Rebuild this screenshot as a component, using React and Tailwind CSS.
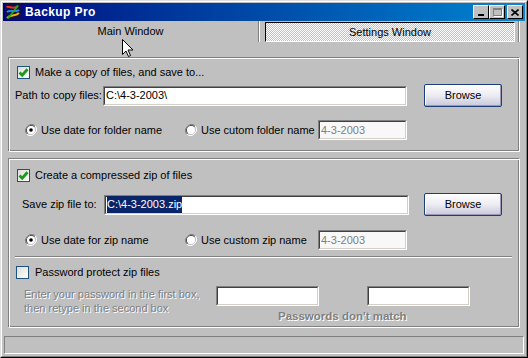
import React from 'react';

const font = { fontFamily: '"Liberation Sans", Arial, sans-serif' };

const Check = ({ checked }) => (
  <div className="w-[13px] h-[13px] border border-[#1c5180] bg-gradient-to-br from-[#dcdcd7] to-white flex items-center justify-center shrink-0">
    {checked && (
      <svg width="11" height="11" viewBox="0 0 11 11">
        <path d="M1.5 5.5 L4.2 8.2 L9.5 2.2" stroke="#1a9a1a" strokeWidth="2.8" fill="none" />
      </svg>
    )}
  </div>
);

const Radio = ({ checked }) => (
  <svg width="12" height="12" viewBox="0 0 12 12" className="shrink-0">
    <path d="M10.2 1.8 A6 6 0 0 0 1.8 10.2" stroke="#808080" strokeWidth="1" fill="none" />
    <path d="M9.5 2.5 A5 5 0 0 0 2.5 9.5" stroke="#404040" strokeWidth="1" fill="none" />
    <path d="M1.8 10.2 A6 6 0 0 0 10.2 1.8" stroke="#fff" strokeWidth="1" fill="none" />
    <circle cx="6" cy="6" r="4" fill="#fff" />
    {checked && <circle cx="6" cy="6" r="1.8" fill="#000" />}
  </svg>
);

const Field = ({ className = '', children, disabled }) => (
  <div
    className={`h-[20px] shrink-0 border-t border-l border-[#808080] border-r border-b border-r-white border-b-white ${className}`}
  >
    <div className={`h-full border-t border-l border-[#404040] border-r border-b border-r-[#d4d0c8] border-b-[#d4d0c8] flex items-center px-[1px] text-[11px] whitespace-nowrap ${disabled ? 'text-[#808080] bg-[#f8f8f8]' : 'text-black bg-white'}`}>
      {children}
    </div>
  </div>
);

const Browse = () => (
  <button className="w-[78px] h-[23px] rounded-[2px] border border-[#1c3e7a] bg-gradient-to-b from-white via-[#ececf2] to-[#c8c8dc] text-[11px] text-black shadow-[inset_-1px_-1px_0_#9a9ab8,inset_1px_1px_0_#fff]">
    Browse
  </button>
);

const Etched = 'border-t border-l border-[#808080] border-r border-b border-r-white border-b-white shadow-[inset_1px_1px_0_#fff,inset_-1px_-1px_0_#808080]';

const Emboss = 'text-[#808080] [text-shadow:1px_1px_0_#fff]';

export default function App() {
  return (
    <div style={font} className="relative w-[528px] h-[358px] bg-[#c0c0c0] border border-t-[#dfdfdf] border-l-[#dfdfdf] border-r-black border-b-black select-none overflow-hidden">
      <div className="h-full border border-t-white border-l-white border-r-[#808080] border-b-[#808080] p-[1px] flex flex-col">
        {/* title bar */}
        <div className="h-[18px] shrink-0 flex items-center bg-gradient-to-r from-[#000080] to-[#1084d0] pl-[2px] pr-[2px]">
          <svg width="16" height="16" viewBox="0 0 16 16" className="shrink-0">
            <rect width="16" height="16" fill="#10104a" />
            <path d="M1.5 3 C5 2, 8 6, 13 2" stroke="#e83018" strokeWidth="2" fill="none" />
            <path d="M2 14 C5 10, 10 13, 14 9" stroke="#f8b000" strokeWidth="2" fill="none" />
            <path d="M2 8 C6 5, 10 9, 14 6" stroke="#2890f8" strokeWidth="2" fill="none" />
            <path d="M13 1.5 C10 6, 6 10, 3 14.5" stroke="#18b018" strokeWidth="1.8" fill="none" />
          </svg>
          <span className="ml-[4px] text-white font-bold text-[12px] tracking-[0.4px]">Backup Pro</span>
          <div className="ml-auto flex items-center">
            <div className="w-[16px] h-[14px] bg-[#c0c0c0] border border-t-white border-l-white border-r-black border-b-black flex items-end justify-center pb-[2px]">
              <div className="w-[6px] h-[2px] bg-black" />
            </div>
            <div className="w-[16px] h-[14px] bg-[#c0c0c0] border border-t-white border-l-white border-r-black border-b-black flex items-center justify-center">
              <div className="w-[9px] h-[8px] border border-t-2 border-[#808080] shadow-[1px_1px_0_#fff]" />
            </div>
            <div className="ml-[2px] w-[16px] h-[14px] bg-[#c0c0c0] border border-t-white border-l-white border-r-black border-b-black flex items-center justify-center">
              <svg width="8" height="7" viewBox="0 0 8 7">
                <path d="M0.5 0.5 L7.5 6.5 M7.5 0.5 L0.5 6.5" stroke="#000" strokeWidth="1.6" />
              </svg>
            </div>
          </div>
        </div>

        {/* tabs */}
        <div className="h-[27px] shrink-0 flex text-[11px]">
          <div className="w-[256px] h-[21px] flex items-center justify-center text-black border-r border-r-[#808080] shadow-[1px_0_0_#fff]">
            Main Window
          </div>
          <div className="ml-[6px] mt-[1px] w-[250px] h-[20px] border border-t-black border-l-black border-r-white border-b-white bg-[repeating-conic-gradient(#fff_0%_25%,#c0c0c0_0%_50%)] bg-[length:2px_2px] flex items-center justify-center text-black">
            Settings Window
          </div>
          <div className="ml-[3px] w-[2px] h-[21px] border-l border-[#808080] border-r border-r-white" />
        </div>

        {/* panel 1 */}
        <div className={`mt-[9px] ml-[5px] w-[512px] h-[95px] shrink-0 ${Etched} text-[11px] text-black whitespace-nowrap`}>
          <div className="h-[13px] mt-[8px] pl-[8px] flex items-center gap-[5px]">
            <Check checked />
            <span>Make a copy of files, and save to...</span>
          </div>
          <div className="h-[23px] mt-[5px] pl-[6px] flex items-center">
            <span className="w-[88px]">Path to copy files:</span>
            <Field className="w-[304px]">C:\4-3-2003\</Field>
            <div className="ml-[17px]"><Browse /></div>
          </div>
          <div className="h-[20px] mt-[13px] pl-[16px] flex items-center">
            <Radio checked />
            <span className="ml-[4px] w-[144px]">Use date for folder name</span>
            <Radio />
            <span className="ml-[4px] w-[117px]">Use cutom folder name</span>
            <Field className="w-[89px]" disabled>4-3-2003</Field>
          </div>
        </div>

        {/* panel 2 */}
        <div className={`mt-[6px] ml-[5px] w-[512px] h-[170px] shrink-0 ${Etched} text-[11px] text-black whitespace-nowrap`}>
          <div className="h-[13px] mt-[10px] pl-[8px] flex items-center gap-[5px]">
            <Check checked />
            <span>Create a compressed zip of files</span>
          </div>
          <div className="h-[23px] mt-[11px] pl-[13px] flex items-center">
            <span className="w-[82px]">Save zip file to:</span>
            <Field className="w-[305px]">
              <span className="bg-[#0a246a] text-white">C:\4-3-2003.zip</span>
            </Field>
            <div className="ml-[15px]"><Browse /></div>
          </div>
          <div className="h-[20px] mt-[14px] pl-[16px] flex items-center">
            <Radio checked />
            <span className="ml-[4px] w-[144px]">Use date for zip name</span>
            <Radio />
            <span className="ml-[4px] w-[117px]">Use custom zip name</span>
            <Field className="w-[89px]" disabled>4-3-2003</Field>
          </div>
          <div className="mt-[6px] ml-[6px] w-[497px] h-[2px] border-t border-[#808080] border-b border-b-white" />
          <div className="h-[13px] mt-[8px] pl-[7px] flex items-center gap-[6px]">
            <Check />
            <span>Password protect zip files</span>
          </div>
          <div className="h-[21px] mt-[6px] pl-[15px] flex items-start">
            <div className={`mt-[2px] w-[192px] text-[11px] leading-[14px] ${Emboss}`}>
              Enter your password in the first box,
              <br />
              then retype in the second box
            </div>
            <Field className="mt-[1px] w-[103px]" />
            <Field className="mt-[1px] ml-[48px] w-[103px]" />
          </div>
          <div className={`mt-[4px] pl-[269px] leading-[13px] text-[11.5px] font-bold ${Emboss}`}>Passwords don't match</div>
        </div>

        {/* status bar */}
        <div className="mt-auto mb-[1px] ml-[1px] w-[520px] h-[18px] border border-t-[#808080] border-l-[#808080] border-r-white border-b-white" />
      </div>

      {/* mouse cursor */}
      <svg className="absolute left-[121px] top-[38px]" width="12" height="19" viewBox="0 0 12 19">
        <path d="M0.5 0.5 L0.5 15.5 L4 12 L6.5 17.5 L8.5 16.5 L6 11 L11 11 Z" fill="#fff" stroke="#000" strokeWidth="1" />
      </svg>
    </div>
  );
}
